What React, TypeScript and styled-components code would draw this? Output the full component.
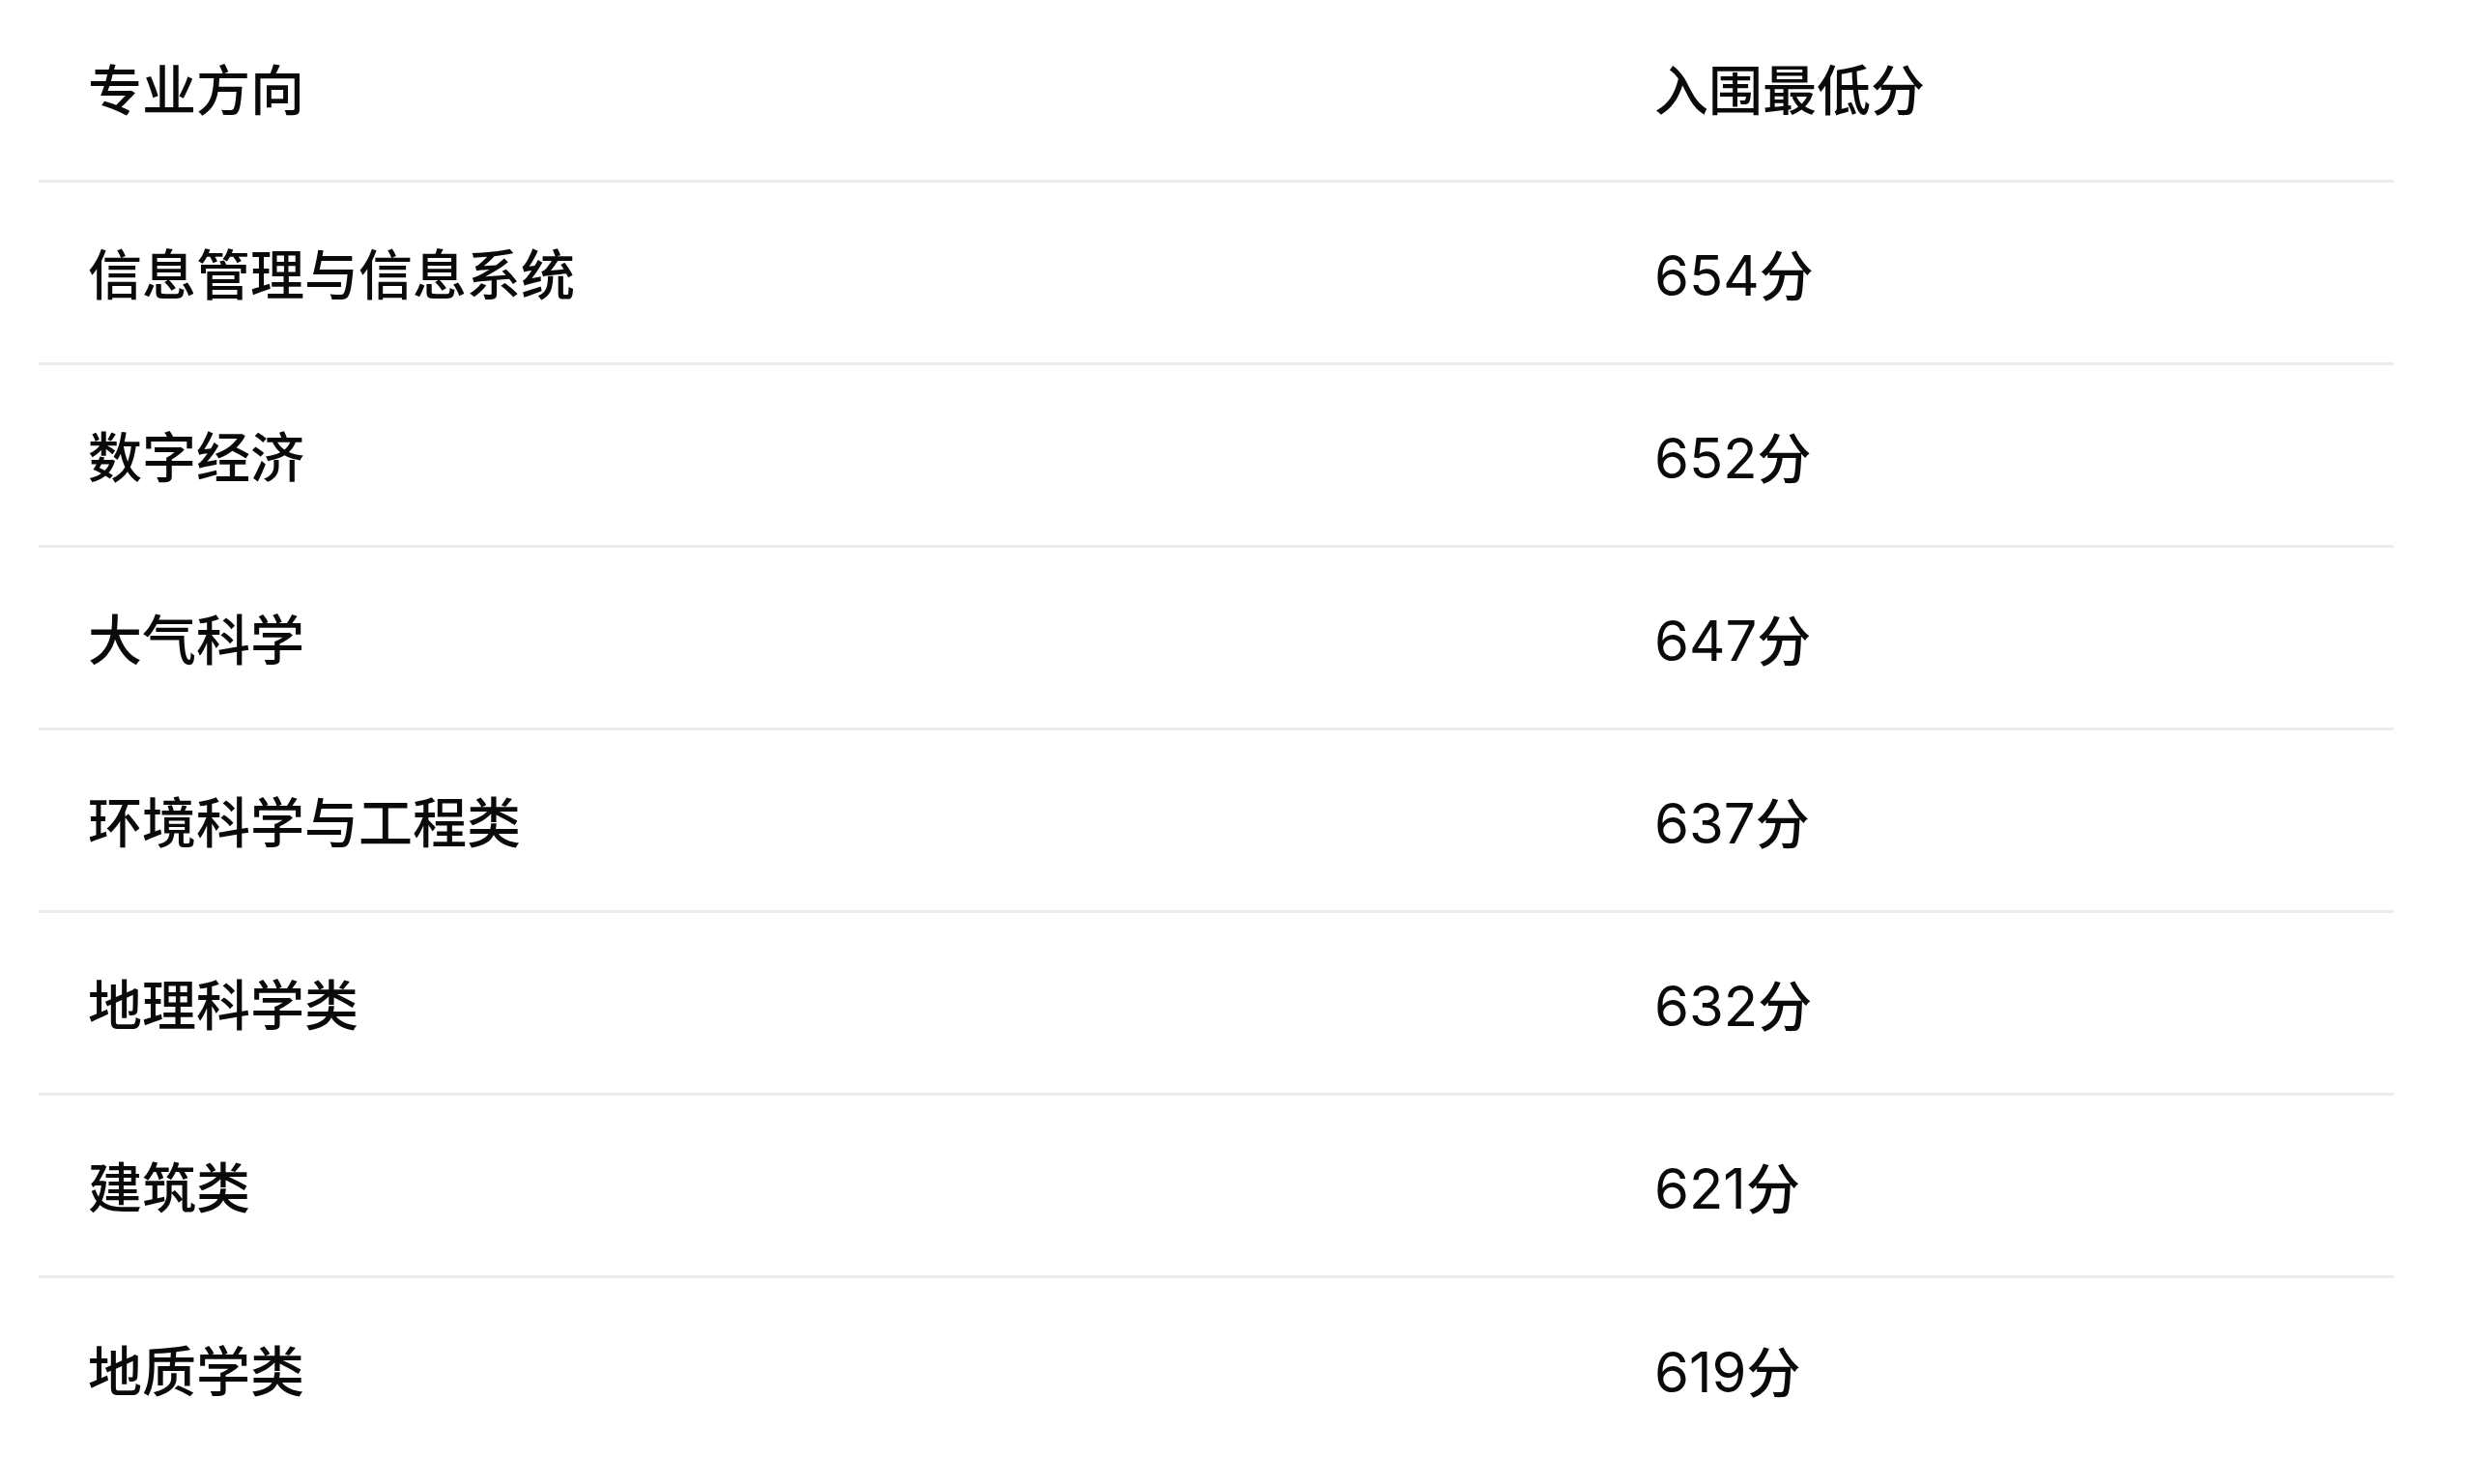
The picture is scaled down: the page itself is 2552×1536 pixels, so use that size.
import React from "react";
import styled, { createGlobalStyle } from "styled-components";

const GlobalStyle = createGlobalStyle`
  html, body {
    margin: 0;
    padding: 0;
    background: #ffffff;
  }
  body {
    font-family: "Inter", "Noto Sans CJK SC", sans-serif;
    color: #000000;
  }
`;

const Page = styled.div`
  width: 2552px;
  height: 1536px;
  overflow: hidden;
  background: #ffffff;
  padding: 0 75px 0 40px;
  box-sizing: border-box;
`;

const Table = styled.div`
  display: flex;
  flex-direction: column;
  width: 100%;
`;

const Row = styled.div<{ $last?: boolean; $first?: boolean }>`
  display: grid;
  grid-template-columns: 1620px 1fr;
  align-items: center;
  height: 189px;
  box-sizing: border-box;
  padding-top: ${(p) => (p.$first ? "2px" : "5px")};
  border-bottom: ${(p) => (p.$last ? "none" : "3px solid #ececec")};
`;

const Cell = styled.div<{ $first?: boolean }>`
  padding-left: ${(p) => (p.$first ? "51px" : "52px")};
  font-size: 56px;
  font-weight: 500;
  line-height: 1;
  font-family: "Inter", "Noto Sans CJK SC", sans-serif;
  color: #0a0a0a;
  white-space: nowrap;
`;

const Num = styled.span`
  font-size: 58px;
  font-weight: 400;
`;

const data: [string, string][] = [
  ["信息管理与信息系统", "654"],
  ["数字经济", "652"],
  ["大气科学", "647"],
  ["环境科学与工程类", "637"],
  ["地理科学类", "632"],
  ["建筑类", "621"],
  ["地质学类", "619"],
];

export default function App() {
  return (
    <>
      <GlobalStyle />
      <Page>
        <Table>
          <Row $first>
            <Cell $first>专业方向</Cell>
            <Cell>入围最低分</Cell>
          </Row>
          {data.map(([name, score], i) => (
            <Row key={name} $last={i === data.length - 1}>
              <Cell $first>{name}</Cell>
              <Cell>
                <Num>{score}</Num>分
              </Cell>
            </Row>
          ))}
        </Table>
      </Page>
    </>
  );
}
